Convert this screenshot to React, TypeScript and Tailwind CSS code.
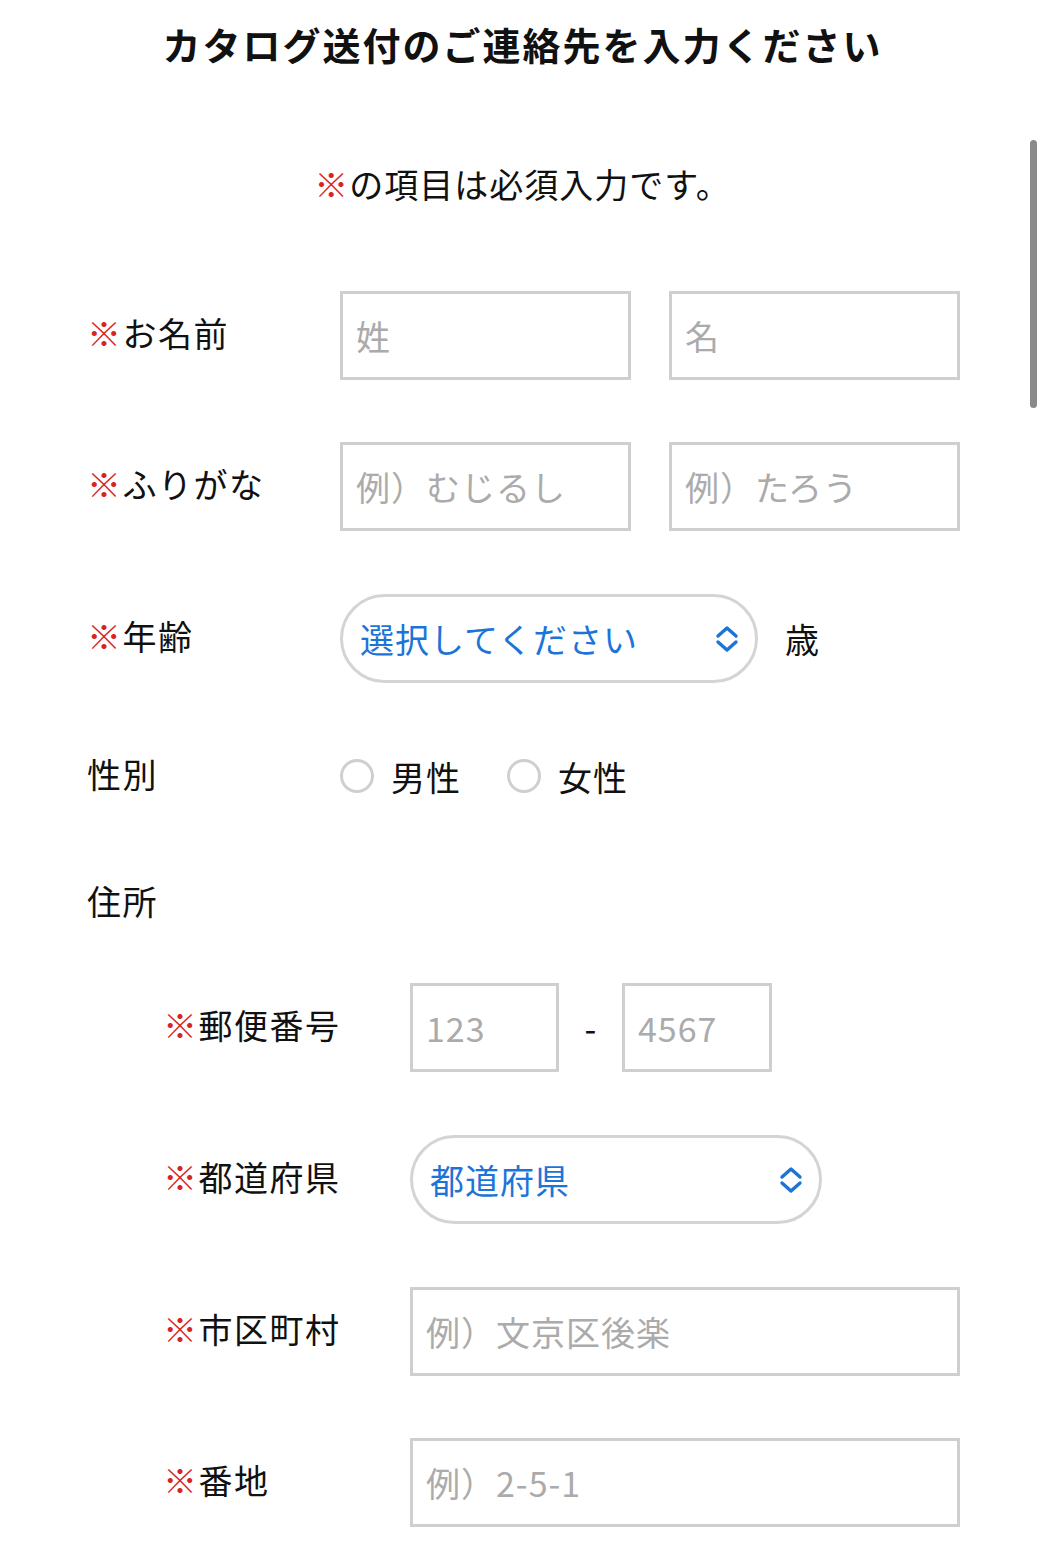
import type { ReactNode } from 'react';

const font = { fontFamily: '"Noto Sans CJK JP", "Noto Sans", sans-serif' };

function Req() {
  return <span className="text-[#d8241c]">※</span>;
}

function TextBox({ placeholder, className = '' }: { placeholder: string; className?: string }) {
  return (
    <input
      placeholder={placeholder}
      className={`h-[89px] border-[3px] border-[#cfcfcf] bg-white pl-[13px] text-[34px] tracking-[1px] text-[#222] outline-none placeholder:text-[#ababab] ${className}`}
      style={font}
    />
  );
}

function UpDown() {
  return (
    <svg width="24" height="28" viewBox="0 0 24 28" fill="none" stroke="#1d74d8" strokeWidth="3.4" strokeLinecap="round" strokeLinejoin="round">
      <path d="M3 11 L12 3 L21 11" />
      <path d="M3 17 L12 25 L21 17" />
    </svg>
  );
}

function Select({ label, className = '' }: { label: string; className?: string }) {
  return (
    <div className={`flex h-[89px] items-center justify-between rounded-full border-[3px] border-[#d4d4d4] bg-white pl-[17px] pr-[16px] ${className}`}>
      <span className="text-[34px] tracking-[1px] text-[#1d74d8]">{label}</span>
      <UpDown />
    </div>
  );
}

function Row({ label, indent, children, className = '' }: { label: ReactNode; indent?: boolean; children: ReactNode; className?: string }) {
  return (
    <div className={`flex items-center ${indent ? 'pl-[163px]' : 'pl-[87px]'} ${className}`}>
      <div className={`${indent ? 'w-[247px]' : 'w-[253px]'} shrink-0 pb-[6px] text-[34px] tracking-[1.5px] text-[#111]`}>{label}</div>
      <div className="flex items-center">{children}</div>
    </div>
  );
}

function Radio({ label }: { label: string }) {
  return (
    <label className="flex items-center gap-[17px]">
      <span className="h-[34px] w-[34px] rounded-full border-[3px] border-[#cfcfcf]" />
      <span className="text-[34px] tracking-[1px] text-[#111]">{label}</span>
    </label>
  );
}

export default function App() {
  return (
    <div className="relative min-h-[1567px] w-[1045px] bg-white pb-[40px] leading-normal" style={font}>
      <h1 className="pt-[16px] text-center text-[38px] font-bold leading-[56px] tracking-[2px] text-[#111]">カタログ送付のご連絡先を入力ください</h1>
      <p className="mt-[86px] text-center text-[34px] tracking-[1px] text-[#111]">
        <Req />の項目は必須入力です。
      </p>

      <Row label={<><Req />お名前</>} className="mt-[82px]">
        <TextBox placeholder="姓" className="w-[291px]" />
        <TextBox placeholder="名" className="ml-[38px] w-[291px]" />
      </Row>

      <Row label={<><Req />ふりがな</>} className="mt-[62px]">
        <TextBox placeholder="例）むじるし" className="w-[291px]" />
        <TextBox placeholder="例）たろう" className="ml-[38px] w-[291px]" />
      </Row>

      <Row label={<><Req />年齢</>} className="mt-[63px]">
        <Select label="選択してください" className="w-[418px]" />
        <span className="ml-[27px] text-[34px] text-[#111]">歳</span>
      </Row>

      <Row label="性別" className="mt-[68px] h-[50px]">
        <Radio label="男性" />
        <div className="ml-[46px]">
          <Radio label="女性" />
        </div>
      </Row>

      <div className="mt-[77px] flex h-[50px] items-center pb-[6px] pl-[87px] text-[34px] tracking-[1.5px] text-[#111]">住所</div>

      <Row indent label={<><Req />郵便番号</>} className="mt-[55px]">
        <TextBox placeholder="123" className="w-[149px]" />
        <span className="w-[63px] text-center text-[34px] text-[#111]">-</span>
        <TextBox placeholder="4567" className="w-[150px]" />
      </Row>

      <Row indent label={<><Req />都道府県</>} className="mt-[63px]">
        <Select label="都道府県" className="w-[412px]" />
      </Row>

      <Row indent label={<><Req />市区町村</>} className="mt-[63px]">
        <TextBox placeholder="例）文京区後楽" className="w-[550px]" />
      </Row>

      <Row indent label={<><Req />番地</>} className="mt-[62px]">
        <TextBox placeholder="例）2-5-1" className="w-[550px]" />
      </Row>

      <div className="absolute left-[1030px] top-[140px] h-[268px] w-[7px] rounded-full bg-[#8a8a8a]" />
    </div>
  );
}
